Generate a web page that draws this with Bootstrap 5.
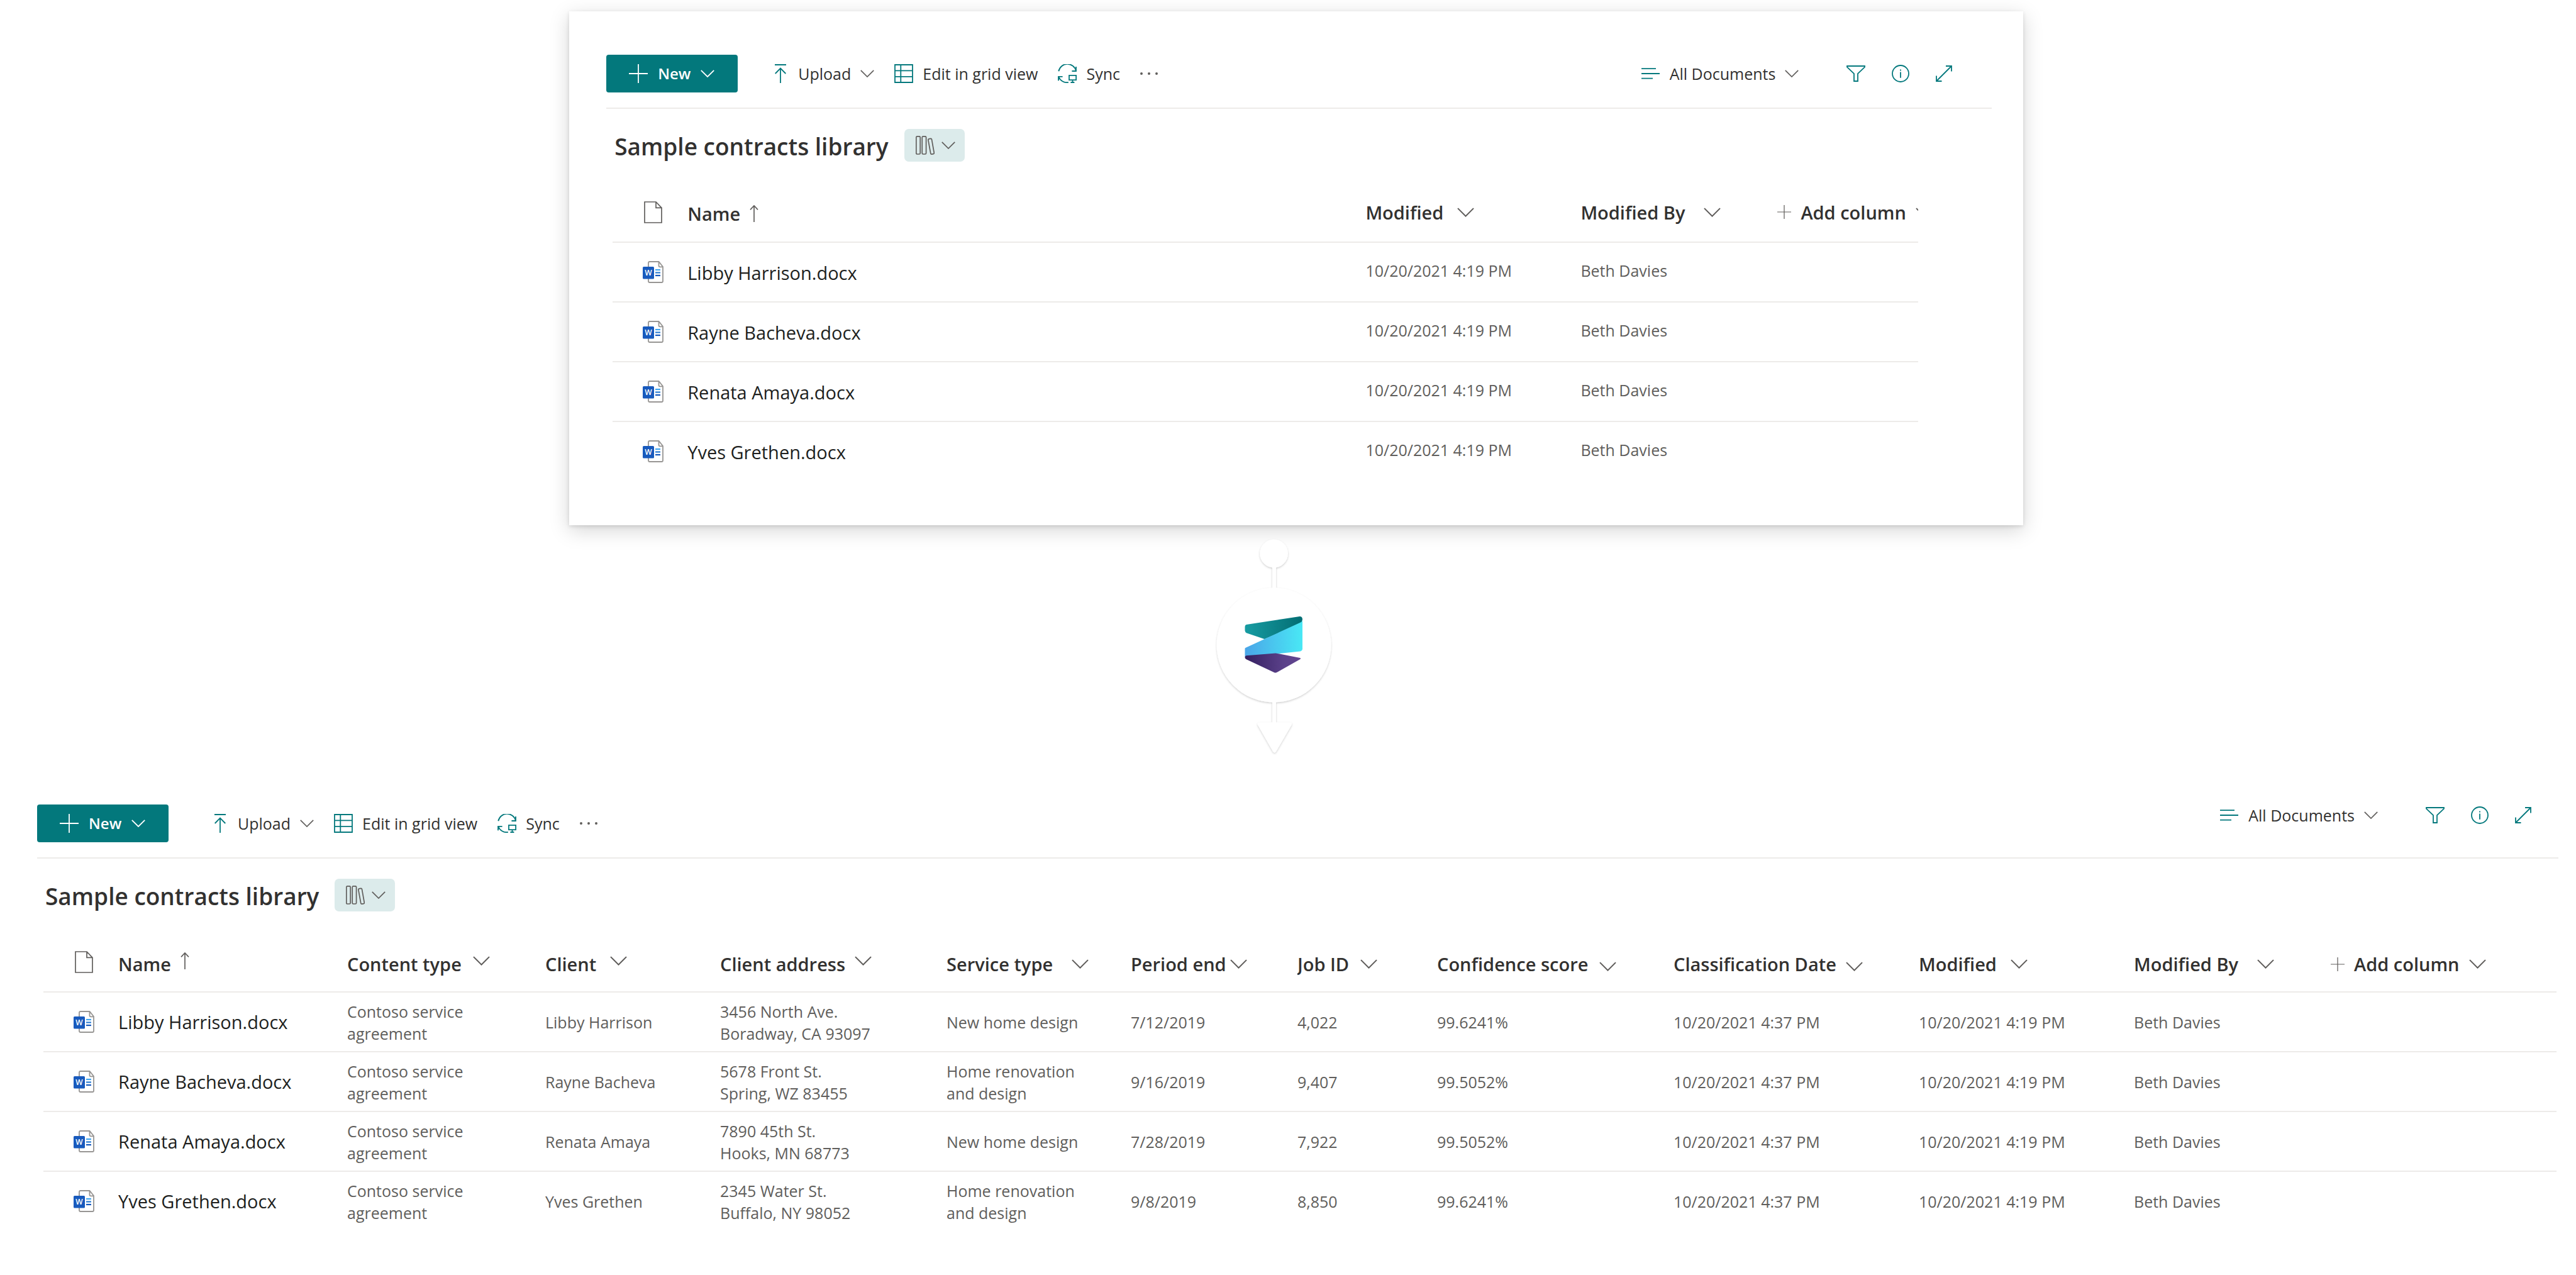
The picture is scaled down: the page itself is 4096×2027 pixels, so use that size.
<!DOCTYPE html>
<html lang="en">
<head>
<meta charset="utf-8">
<meta name="viewport" content="width=device-width, initial-scale=1">
<title>Sample contracts library</title>
<link href="https://cdn.jsdelivr.net/npm/bootstrap@5.3.0/dist/css/bootstrap.min.css" rel="stylesheet">
<style>
  :root { --teal: #03787c; --ink: #323130; --soft: #605e5c; --line: #edebe9; }
  body { font-family: "Open Sans", "Noto Sans", sans-serif; font-size: 25px; line-height: 35px; color: var(--ink); background: #fff; }
  svg { display: block; flex: none; fill: none; }
  .soft { stroke: var(--soft); stroke-width: 1.7; }
  .accent { stroke: var(--teal); stroke-width: 1.8; }
  .white { stroke: #fff; stroke-width: 1.8; }

  .library-before { width: 56.45%; margin: 18px 0 0 22.1%; padding: 69px 50px 69px 59px; border: 0; border-radius: 0; box-shadow: 0 8px 30px rgba(0,0,0,.17), 0 2px 6px rgba(0,0,0,.12); }
  .library-after { padding: 0 28px 60px 59px; margin-top: 64px; }

  .toolbar { height: 86px; border-bottom: 2px solid var(--line); }
  .tool { display: flex; align-items: center; border: 0; padding: 0; background: none; color: inherit; white-space: nowrap; }
  .btn-new { width: 209px; height: 60px; padding: 0 0 0 36px; border: 0; border-radius: 4px; background: var(--teal); color: #fff; font-size: 24px; font-weight: 600; }
  .btn-new:hover { background: #026467; color: #fff; }
  .tool-set { height: 60px; gap: 32px; padding-left: 59px; }
  .library-after .tool-set { padding-left: 73px; }
  .tool-set .tool, .view-set .tool { gap: 15px; }
  .view-set { height: 60px; gap: 42px; padding-right: 63px; }
  .view-set .view-name { margin-right: 34px; }
  .library-after .view-set { height: 34px; padding-right: 43px; }

  .title-row { margin: 32px 0 33px 13px; height: 52px; gap: 25px; }
  .title-row h1 { font-size: 37px; line-height: 52px; font-weight: 600; margin: 0; padding-top: 4px; }
  .btn-library { width: 96px; height: 52px; padding: 0 15px 0 18px; border: 0; border-radius: 7px; background: #dcebeb; }

  .doc-list { table-layout: fixed; margin: 0 0 0 10px; --bs-table-bg: transparent; color: var(--soft); font-size: 25px; }
  .library-before .doc-list { width: calc(100% - 127px); }
  .library-after .doc-list { width: calc(100% - 13px); }
  .doc-list th, .doc-list td { height: 95px; padding: 0; border: 0; border-bottom: 2px solid var(--line); vertical-align: middle; overflow: hidden; white-space: nowrap; }
  .doc-list tbody tr:last-child td { border-bottom-color: transparent; }
  .doc-list thead .tool { font-size: 29px; font-weight: 600; color: var(--ink); }
  .doc-list td:first-child, .doc-list th:first-child { padding-left: 48px; }
  .doc-list th:first-child { padding-left: 50px; }
  .library-before td:nth-child(2) { padding-top: 3px; }
  .library-before td:nth-child(n+3) { padding-bottom: 5px; }
  .library-after th .tool { padding-top: 7px; }
  .library-after td:nth-child(n+2) { padding-top: 2px; }
  .doc-list a { font-size: 29px; color: #201f1e; text-decoration: none; }
  .c-icon { width: 119px; } .c-name { width: 364px; } .c-type { width: 315px; } .c-client { width: 278px; }
  .c-address { width: 360px; } .c-service { width: 293px; } .c-period { width: 265px; } .c-job { width: 222px; }
  .c-score { width: 376px; } .c-class { width: 390px; } .c-mod { width: 342px; } .c-by { width: 313px; } .c-add { width: 224px; }
  .g6 { gap: 6px; } .g15 { gap: 15px; } .g18 { gap: 18px; } .g22 { gap: 22px; } .g30 { gap: 30px; }
  .high { margin-bottom: 10px; } .low { margin-top: 8px; }
  .word-w { font: 600 12px "Open Sans", sans-serif; fill: #fff; text-anchor: middle; }

  .connector { position: relative; margin-left: 47.02%; }
</style>
</head>
<body>

<svg width="0" height="0" class="position-absolute" aria-hidden="true">
  <symbol id="plus" viewBox="0 0 30 30"><path d="M15 0V30M0 15H30"/></symbol>
  <symbol id="chev" viewBox="0 0 22 12"><path d="M.8.8L11 11L21.2.8"/></symbol>
  <symbol id="upload" viewBox="0 0 18 30"><path d="M0 1H18M9 6V30M.7 15L9 6.6L17.3 15"/></symbol>
  <symbol id="grid" viewBox="0 0 30 30"><path d="M1 1H29V29H1ZM10.3 1V29M1 10.4H29M1 19.9H29"/></symbol>
  <symbol id="sync" viewBox="0 0 30 30"><path d="M1.3 11.3A14.2 14.2 0 0 1 29 10.6M29 4V11H22.4M1 26.2V19.8H7.6M1.2 20A14.6 14.6 0 0 0 16.8 29M18 17.8H29.1V25.2H18ZM23.5 25.2V29M20.4 29H26.4"/></symbol>
  <symbol id="books" viewBox="0 0 30 30"><rect x=".8" y=".8" width="6.4" height="28.2" rx="1.6"/><rect x="10.2" y=".8" width="6.4" height="28.2" rx="1.6"/><path d="M19.9 6.6Q19.7 5.2 21 4.9L23.8 4.4Q25.2 4.2 25.5 5.6L29.3 27Q29.5 28.3 28.2 28.6L25.5 29.1Q24.1 29.3 23.8 28Z"/></symbol>
  <symbol id="list" viewBox="0 0 30 18"><path d="M0 1.2H23M0 9H29M0 16.6H18"/></symbol>
  <symbol id="filter" viewBox="0 0 30 26"><path d="M1 1H29V2.6L18 13.2V25H12V13.2L1 2.6Z"/></symbol>
  <symbol id="info" viewBox="0 0 28 28"><circle cx="14" cy="14" r="13"/><path d="M14 7.6V9.4M14 11.4V20.8"/></symbol>
  <symbol id="expand" viewBox="0 0 26 26"><path d="M1 25L25 1M16 1H25V9.5M1 16.5V25H9.5"/></symbol>
  <symbol id="dots" viewBox="0 0 28 6"><path d="M0 3A2 2 0 0 0 4 3A2 2 0 0 0 0 3M12 3A2 2 0 0 0 16 3A2 2 0 0 0 12 3M24 3A2 2 0 0 0 28 3A2 2 0 0 0 24 3" fill="#605e5c"/></symbol>
  <symbol id="doc" viewBox="0 0 29 35"><path d="M1 1H19L28 10.4V34H1ZM19 1V10.4H28"/></symbol>
  <symbol id="up" viewBox="0 0 14 27"><path d="M7 1V27M1 7.3L7 1L13 7.3"/></symbol>
  <symbol id="word" viewBox="0 0 33 35">
    <path d="M11 1H25.5L32 9V32Q32 34 30 34H11Q9 34 9 32V3Q9 1 11 1ZM25.5 1V7.5Q25.5 9.4 27.5 9.4H32" fill="#fff" stroke="#979593" stroke-width="1.8"/>
    <rect y="9" width="18" height="19.5" rx="1.6" fill="#185abd"/>
    <path d="M20 14H28" stroke="#41a5ee" stroke-width="2.2"/><path d="M20 18.5H28" stroke="#2b7cd3" stroke-width="2.2"/><path d="M20 23H28" stroke="#185abd" stroke-width="2.2"/>
  </symbol>
</svg>

<section class="card library-before">
  <div class="toolbar d-flex align-items-start">
    <button type="button" class="btn btn-new d-flex align-items-center"><svg class="white" width="30" height="30"><use href="#plus"/></svg><span class="ms-3">New</span><svg class="white ms-3" width="22" height="12"><use href="#chev"/></svg></button>
    <div class="tool-set d-flex align-items-center">
      <button type="button" class="tool"><svg class="accent me-1" width="18" height="30"><use href="#upload"/></svg>Upload<svg class="soft" width="22" height="12"><use href="#chev"/></svg></button>
      <button type="button" class="tool"><svg class="accent" width="30" height="30"><use href="#grid"/></svg>Edit in grid view</button>
      <button type="button" class="tool"><svg class="accent" width="30" height="30"><use href="#sync"/></svg>Sync</button>
      <button type="button" class="tool" aria-label="More"><svg width="28" height="6"><use href="#dots"/></svg></button>
    </div>
    <div class="view-set d-flex align-items-center ms-auto">
      <button type="button" class="tool view-name"><svg class="accent" width="30" height="18"><use href="#list"/></svg>All Documents<svg class="soft" width="22" height="12"><use href="#chev"/></svg></button>
      <button type="button" class="tool" aria-label="Filter"><svg class="accent" width="30" height="26"><use href="#filter"/></svg></button>
      <button type="button" class="tool" aria-label="Details"><svg class="accent" width="28" height="28"><use href="#info"/></svg></button>
      <button type="button" class="tool" aria-label="Expand"><svg class="accent" width="26" height="26"><use href="#expand"/></svg></button>
    </div>
  </div>
  <div class="title-row d-flex align-items-center"><h1>Sample contracts library</h1><button type="button" class="btn btn-library d-flex align-items-center justify-content-between" aria-label="Switch library"><svg class="soft" width="30" height="30"><use href="#books"/></svg><svg class="soft" width="22" height="12"><use href="#chev"/></svg></button></div>
  <table class="table doc-list">
    <colgroup><col class="c-icon"><col><col class="c-mod"><col class="c-by"><col class="c-add"></colgroup>
    <thead><tr>
      <th scope="col"><svg class="soft" width="29" height="35" role="img" aria-label="File type"><use href="#doc"/></svg></th>
      <th scope="col"><button type="button" class="tool g15 pt-1">Name<svg class="soft" width="14" height="27"><use href="#up"/></svg></button></th>
      <th scope="col"><button type="button" class="tool g22">Modified<svg class="soft" width="27" height="15"><use href="#chev"/></svg></button></th>
      <th scope="col"><button type="button" class="tool g30">Modified By<svg class="soft" width="27" height="15"><use href="#chev"/></svg></button></th>
      <th scope="col"><button type="button" class="tool g15"><svg class="soft" width="22" height="22"><use href="#plus"/></svg>Add column<svg class="soft" width="27" height="15"><use href="#chev"/></svg></button></th>
    </tr></thead>
    <tbody>
      <tr><td><svg width="33" height="35"><use href="#word"/><text class="word-w" x="9" y="23">W</text></svg></td><td><a href="#">Libby Harrison.docx</a></td><td>10/20/2021 4:19 PM</td><td>Beth Davies</td><td></td></tr>
      <tr><td><svg width="33" height="35"><use href="#word"/><text class="word-w" x="9" y="23">W</text></svg></td><td><a href="#">Rayne Bacheva.docx</a></td><td>10/20/2021 4:19 PM</td><td>Beth Davies</td><td></td></tr>
      <tr><td><svg width="33" height="35"><use href="#word"/><text class="word-w" x="9" y="23">W</text></svg></td><td><a href="#">Renata Amaya.docx</a></td><td>10/20/2021 4:19 PM</td><td>Beth Davies</td><td></td></tr>
      <tr><td><svg width="33" height="35"><use href="#word"/><text class="word-w" x="9" y="23">W</text></svg></td><td><a href="#">Yves Grethen.docx</a></td><td>10/20/2021 4:19 PM</td><td>Beth Davies</td><td></td></tr>
    </tbody>
  </table>
</section>

<svg class="connector" width="200" height="380" viewBox="0 0 200 380" role="img" aria-label="Processed by Microsoft Syntex">
  <defs>
    <linearGradient id="ga" x1="0" x2="1"><stop offset="0" stop-color="#179ca2"/><stop offset="1" stop-color="#036d73"/></linearGradient>
    <linearGradient id="gb" x1="0" x2="1"><stop offset="0" stop-color="#4aa5e8"/><stop offset="1" stop-color="#49e8f5"/></linearGradient>
    <linearGradient id="gc" x1="0" x2="1"><stop offset="0" stop-color="#341f60"/><stop offset=".7" stop-color="#5b418a"/><stop offset="1" stop-color="#61458f"/></linearGradient>
    <filter id="sh" x="-20%" y="-20%" width="140%" height="140%"><feDropShadow dx="0" dy="1.5" stdDeviation="1.5" flood-color="#000" flood-opacity=".2"/></filter>
  </defs>
  <g filter="url(#sh)" fill="#fff">
    <rect x="97" y="60" width="6" height="260"/>
    <circle cx="99.6" cy="45" r="22.4"/>
    <circle cx="99.6" cy="190.5" r="91"/>
    <path d="M76 313.6H126Q129 314 127.6 317.4L103.2 359.4Q100.6 363.4 98 359.4L74 317.4Q72.4 314 76 313.6Z"/>
  </g>
  <path fill="url(#ga)" d="M53.5 161.3Q53.8 158.4 55.8 158.1L140.6 145Q145 145 145 150L143.2 156L84.6 181L55.8 171.2Q53.8 170 53.5 167.6Z"/>
  <path fill="url(#gb)" d="M53.5 196Q54 195 55.3 194.6L142 154.4Q144.2 153.6 145 151.6V196.8Q144.4 200 141.4 200.4L53.5 209.9Z"/>
  <path fill="url(#gc)" d="M53.5 209.9Q54 207.4 55.8 207.2L102.4 203.4L141.4 211Q142.6 212 141.4 212.9L105 233.6Q102.4 235.2 99.9 233.9L55.8 213.2Q53.6 212 53.5 209.9Z"/>
</svg>

<section class="library-after">
  <div class="toolbar d-flex align-items-start">
    <button type="button" class="btn btn-new d-flex align-items-center"><svg class="white" width="30" height="30"><use href="#plus"/></svg><span class="ms-3">New</span><svg class="white ms-3" width="22" height="12"><use href="#chev"/></svg></button>
    <div class="tool-set d-flex align-items-center">
      <button type="button" class="tool"><svg class="accent me-1" width="18" height="30"><use href="#upload"/></svg>Upload<svg class="soft" width="22" height="12"><use href="#chev"/></svg></button>
      <button type="button" class="tool"><svg class="accent" width="30" height="30"><use href="#grid"/></svg>Edit in grid view</button>
      <button type="button" class="tool"><svg class="accent" width="30" height="30"><use href="#sync"/></svg>Sync</button>
      <button type="button" class="tool" aria-label="More"><svg width="28" height="6"><use href="#dots"/></svg></button>
    </div>
    <div class="view-set d-flex align-items-center ms-auto">
      <button type="button" class="tool view-name"><svg class="accent" width="30" height="18"><use href="#list"/></svg>All Documents<svg class="soft" width="22" height="12"><use href="#chev"/></svg></button>
      <button type="button" class="tool" aria-label="Filter"><svg class="accent" width="30" height="26"><use href="#filter"/></svg></button>
      <button type="button" class="tool" aria-label="Details"><svg class="accent" width="28" height="28"><use href="#info"/></svg></button>
      <button type="button" class="tool" aria-label="Expand"><svg class="accent" width="26" height="26"><use href="#expand"/></svg></button>
    </div>
  </div>
  <div class="title-row d-flex align-items-center"><h1>Sample contracts library</h1><button type="button" class="btn btn-library d-flex align-items-center justify-content-between" aria-label="Switch library"><svg class="soft" width="30" height="30"><use href="#books"/></svg><svg class="soft" width="22" height="12"><use href="#chev"/></svg></button></div>
  <table class="table doc-list">
    <colgroup><col class="c-icon"><col class="c-name"><col class="c-type"><col class="c-client"><col class="c-address"><col class="c-service"><col class="c-period"><col class="c-job"><col class="c-score"><col class="c-class"><col class="c-mod"><col class="c-by"><col></colgroup>
    <thead><tr>
      <th scope="col"><svg class="soft" width="29" height="35" role="img" aria-label="File type"><use href="#doc"/></svg></th>
      <th scope="col"><button type="button" class="tool g15">Name<svg class="soft high" width="14" height="27"><use href="#up"/></svg></button></th>
      <th scope="col"><button type="button" class="tool g18">Content type<svg class="soft high" width="27" height="15"><use href="#chev"/></svg></button></th>
      <th scope="col"><button type="button" class="tool g22">Client<svg class="soft high" width="27" height="15"><use href="#chev"/></svg></button></th>
      <th scope="col"><button type="button" class="tool g15">Client address<svg class="soft high" width="27" height="15"><use href="#chev"/></svg></button></th>
      <th scope="col"><button type="button" class="tool g30">Service type<svg class="soft" width="27" height="15"><use href="#chev"/></svg></button></th>
      <th scope="col"><button type="button" class="tool g6">Period end<svg class="soft" width="27" height="15"><use href="#chev"/></svg></button></th>
      <th scope="col"><button type="button" class="tool g18">Job ID<svg class="soft" width="27" height="15"><use href="#chev"/></svg></button></th>
      <th scope="col"><button type="button" class="tool g18">Confidence score<svg class="soft low" width="27" height="15"><use href="#chev"/></svg></button></th>
      <th scope="col"><button type="button" class="tool g15">Classification Date<svg class="soft low" width="27" height="15"><use href="#chev"/></svg></button></th>
      <th scope="col"><button type="button" class="tool g22">Modified<svg class="soft" width="27" height="15"><use href="#chev"/></svg></button></th>
      <th scope="col"><button type="button" class="tool g30">Modified By<svg class="soft" width="27" height="15"><use href="#chev"/></svg></button></th>
      <th scope="col"><button type="button" class="tool g15"><svg class="soft" width="22" height="22"><use href="#plus"/></svg>Add column<svg class="soft" width="27" height="15"><use href="#chev"/></svg></button></th>
    </tr></thead>
    <tbody>
      <tr><td><svg width="33" height="35"><use href="#word"/><text class="word-w" x="9" y="23">W</text></svg></td><td><a href="#">Libby Harrison.docx</a></td><td>Contoso service<br>agreement</td><td>Libby Harrison</td><td>3456 North Ave.<br>Boradway, CA 93097</td><td>New home design</td><td>7/12/2019</td><td>4,022</td><td>99.6241%</td><td>10/20/2021 4:37 PM</td><td>10/20/2021 4:19 PM</td><td>Beth Davies</td><td></td></tr>
      <tr><td><svg width="33" height="35"><use href="#word"/><text class="word-w" x="9" y="23">W</text></svg></td><td><a href="#">Rayne Bacheva.docx</a></td><td>Contoso service<br>agreement</td><td>Rayne Bacheva</td><td>5678 Front St.<br>Spring, WZ 83455</td><td>Home renovation<br>and design</td><td>9/16/2019</td><td>9,407</td><td>99.5052%</td><td>10/20/2021 4:37 PM</td><td>10/20/2021 4:19 PM</td><td>Beth Davies</td><td></td></tr>
      <tr><td><svg width="33" height="35"><use href="#word"/><text class="word-w" x="9" y="23">W</text></svg></td><td><a href="#">Renata Amaya.docx</a></td><td>Contoso service<br>agreement</td><td>Renata Amaya</td><td>7890 45th St.<br>Hooks, MN 68773</td><td>New home design</td><td>7/28/2019</td><td>7,922</td><td>99.5052%</td><td>10/20/2021 4:37 PM</td><td>10/20/2021 4:19 PM</td><td>Beth Davies</td><td></td></tr>
      <tr><td><svg width="33" height="35"><use href="#word"/><text class="word-w" x="9" y="23">W</text></svg></td><td><a href="#">Yves Grethen.docx</a></td><td>Contoso service<br>agreement</td><td>Yves Grethen</td><td>2345 Water St.<br>Buffalo, NY 98052</td><td>Home renovation<br>and design</td><td>9/8/2019</td><td>8,850</td><td>99.6241%</td><td>10/20/2021 4:37 PM</td><td>10/20/2021 4:19 PM</td><td>Beth Davies</td><td></td></tr>
    </tbody>
  </table>
</section>

<script src="https://cdn.jsdelivr.net/npm/bootstrap@5.3.0/dist/js/bootstrap.bundle.min.js"></script>
</body>
</html>
